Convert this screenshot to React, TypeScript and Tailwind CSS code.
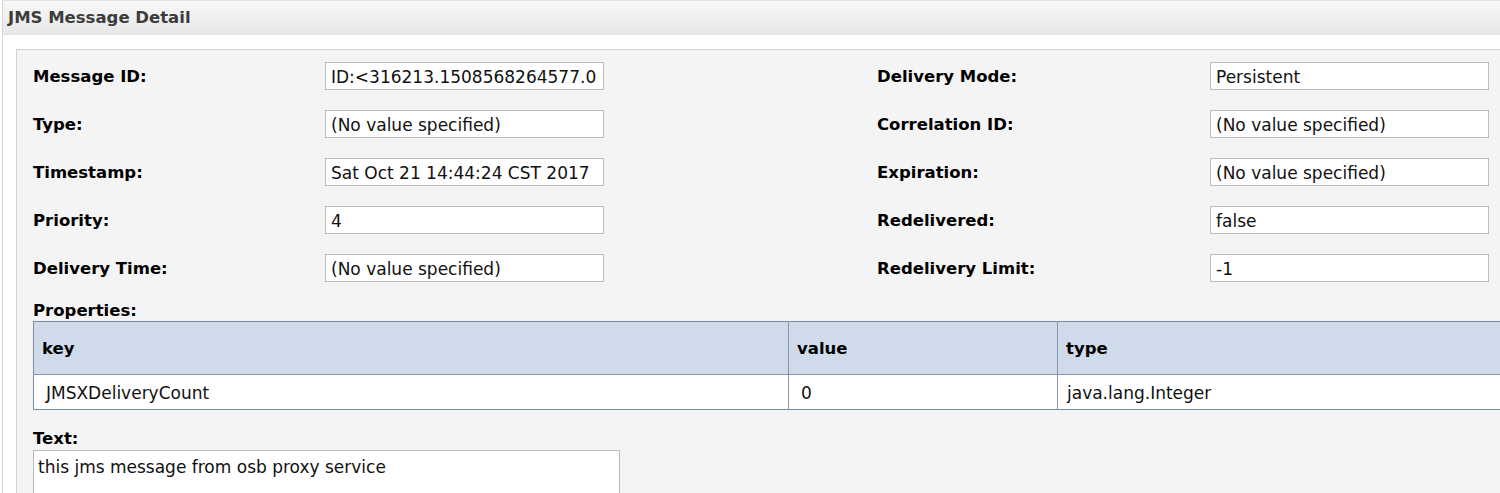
import React from 'react'

interface Field {
  label: string
  value: string
}

const leftFields: Field[] = [
  { label: 'Message ID:', value: 'ID:<316213.1508568264577.0' },
  { label: 'Type:', value: '(No value specified)' },
  { label: 'Timestamp:', value: 'Sat Oct 21 14:44:24 CST 2017' },
  { label: 'Priority:', value: '4' },
  { label: 'Delivery Time:', value: '(No value specified)' },
]

const rightFields: Field[] = [
  { label: 'Delivery Mode:', value: 'Persistent' },
  { label: 'Correlation ID:', value: '(No value specified)' },
  { label: 'Expiration:', value: '(No value specified)' },
  { label: 'Redelivered:', value: 'false' },
  { label: 'Redelivery Limit:', value: '-1' },
]

function ValueBox({ value }: { value: string }) {
  return (
    <div className="h-[28px] overflow-hidden whitespace-nowrap border border-[#bcbcbc] bg-white px-[5px] pt-[1px] text-[17px] leading-[26px] text-[#111]">
      {value}
    </div>
  )
}

function Label({ children }: { children: React.ReactNode }) {
  return <div className="text-[16.5px] font-bold leading-[20px] text-black">{children}</div>
}

export default function App() {
  return (
    <div className="h-[493px] w-[1500px] overflow-hidden bg-white font-['DejaVu_Sans',sans-serif]">
      <div className="ml-[2px] h-full border-l border-[#d6d6d6]">
        {/* Title bar */}
        <div className="flex h-[35px] items-center border-t border-b border-[#e2e2e2] bg-gradient-to-b from-[#f8f8f8] to-[#e8e8e8] pl-[5px] pt-[2px]">
          <span className="text-[16.5px] font-bold text-[#3c3c3c]">JMS Message Detail</span>
        </div>

        <div className="pl-[13px] pt-[14px]">
          <div className="w-[1560px] border border-[#d2d2d2] bg-[#f4f4f4] pl-[16px] pt-[12px]">
            {/* Header fields */}
            <div className="grid grid-cols-[292px_279px_273px_333px_279px] gap-y-[20px]">
              {leftFields.map((f, i) => (
                <React.Fragment key={f.label}>
                  <div className="flex h-[28px] items-center pt-[2px]">
                    <Label>{f.label}</Label>
                  </div>
                  <ValueBox value={f.value} />
                  <div />
                  <div className="flex h-[28px] items-center pt-[2px]">
                    <Label>{rightFields[i].label}</Label>
                  </div>
                  <ValueBox value={rightFields[i].value} />
                </React.Fragment>
              ))}
            </div>

            {/* Properties */}
            <div className="mt-[19px]">
              <Label>Properties:</Label>
            </div>
            <table className="w-[1520px] table-fixed border-collapse border border-[#7d8aa4] text-[17px]">
              <colgroup>
                <col className="w-[755px]" />
                <col className="w-[269px]" />
                <col />
              </colgroup>
              <thead>
                <tr className="h-[53px] bg-[#cfdbeb]">
                  <th className="border-r border-b border-[#8895ad] pl-[8px] pt-[3px] text-left text-[16.5px] font-bold">key</th>
                  <th className="border-r border-b border-[#8895ad] pl-[8px] pt-[3px] text-left text-[16.5px] font-bold">value</th>
                  <th className="border-b border-[#8895ad] pl-[8px] pt-[3px] text-left text-[16.5px] font-bold">type</th>
                </tr>
              </thead>
              <tbody>
                <tr className="h-[35px] bg-white text-[#111]">
                  <td className="border-r border-[#8895ad] pl-[12px] pt-[3px]">JMSXDeliveryCount</td>
                  <td className="border-r border-[#8895ad] pl-[12px] pt-[3px]">0</td>
                  <td className="pl-[9px] pt-[3px]">java.lang.Integer</td>
                </tr>
              </tbody>
            </table>

            {/* Text */}
            <div className="mt-[19px]">
              <Label>Text:</Label>
            </div>
            <div className="mt-[1px] h-[80px] w-[587px] border border-[#b9b9b9] bg-white px-[4px] pt-[4px] text-[17px] leading-[24px] text-[#111]">
              this jms message from osb proxy service
            </div>
          </div>
        </div>
      </div>
    </div>
  )
}
